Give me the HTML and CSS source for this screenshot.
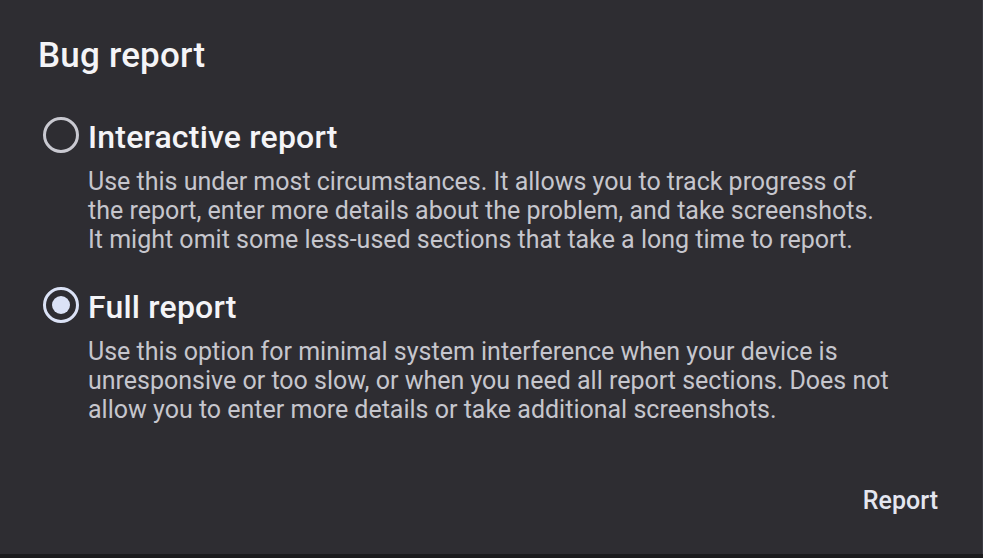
FILE: index.html
```html
<!DOCTYPE html>
<html lang="en">
<head>
<meta charset="utf-8">
<title>Bug report</title>
<link rel="stylesheet" href="styles.css">
</head>
<body>
<div class="dialog">
  <h1 class="title">Bug report</h1>
  <div class="option">
    <div class="row">
      <span class="radio"></span>
      <span class="label">Interactive report</span>
    </div>
    <p class="desc">Use this under most circumstances. It allows you to track progress of the report, enter more details about the problem, and take screenshots. It might omit some less-used sections that take a long time to report.</p>
  </div>
  <div class="option option-second">
    <div class="row">
      <span class="radio checked"></span>
      <span class="label">Full report</span>
    </div>
    <p class="desc">Use this option for minimal system interference when your device is unresponsive or too slow, or when you need all report sections. Does not allow you to enter more details or take additional screenshots.</p>
  </div>
  <div class="actions">
    <span class="button">Report</span>
  </div>
</div>
</body>
</html>
```
FILE: styles.css
```css
html, body {
  margin: 0;
  padding: 0;
  background: #1b1b1d;
}
body {
  width: 983px;
  height: 558px;
  overflow: hidden;
  font-family: Roboto, "Liberation Sans", sans-serif;
}
.dialog {
  box-sizing: border-box;
  height: 554px;
  background: #2e2d32;
  padding: 36px 44px 39px 38px;
  display: flex;
  flex-direction: column;
  border-right: 1px solid #3a3a42;
}
.title {
  margin: 0;
  font-size: 35px;
  line-height: 40px;
  font-weight: 500;
  letter-spacing: 0.2px;
  color: #f4f4f7;
}
.option {
  margin-top: 41px;
}
.option-second {
  margin-top: 33px;
}
.row {
  display: flex;
  align-items: center;
  height: 36px;
}
.radio {
  box-sizing: border-box;
  width: 36px;
  height: 36px;
  margin-left: 5px;
  margin-right: 9px;
  border: 3px solid #c9c9d1;
  border-radius: 50%;
  display: flex;
  align-items: center;
  justify-content: center;
}
.radio.checked {
  border-color: #dbe2f6;
}
.radio.checked::after {
  content: "";
  width: 18px;
  height: 18px;
  border-radius: 50%;
  background: #dbe2f6;
}
.label {
  font-size: 32px;
  line-height: 36px;
  font-weight: 500;
  letter-spacing: 0.2px;
  color: #f4f4f7;
  position: relative;
  top: 2px;
}
.desc {
  width: 804px;
  margin: 14px 0 0 50px;
  font-size: 25px;
  line-height: 29px;
  color: #c6c6cd;
}
.actions {
  margin-top: auto;
  display: flex;
  justify-content: flex-end;
}
.button {
  font-size: 25px;
  line-height: 29px;
  font-weight: 500;
  color: #e4e6f0;
}
```
